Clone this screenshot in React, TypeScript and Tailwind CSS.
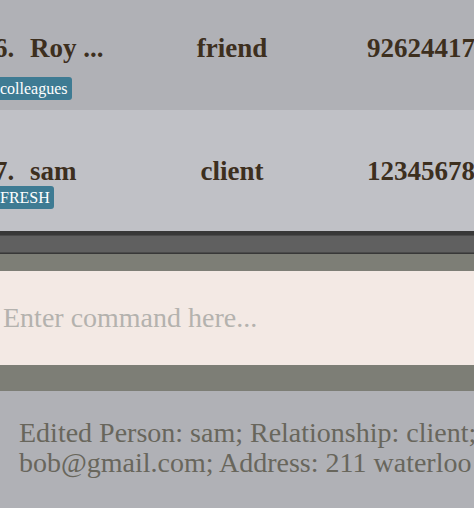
import React from "react";

const serif = { fontFamily: '"Liberation Serif", "DejaVu Serif", serif' };

function Row({
  bg,
  h,
  pt,
  gap,
  idx,
  name,
  rel,
  phone,
  tag,
}: {
  bg: string;
  h: string;
  pt: string;
  gap: string;
  idx: string;
  name: string;
  rel: string;
  phone: string;
  tag: string;
}) {
  return (
    <div className={`${bg} ${h} ${pt} overflow-hidden`}>
      <div className="flex items-baseline text-[27px] font-bold leading-[30px] text-[#3d2f1e] whitespace-nowrap">
        <div className="flex w-[166px] ml-[-6px] shrink-0">
          <span className="w-[36px]">{idx}</span>
          <span>{name}</span>
        </div>
        <div className="w-[144px] shrink-0 text-center">{rel}</div>
        <div className="pl-[63px]">{phone}</div>
      </div>
      <div className={`flex ${gap}`}>
        <span className="ml-[-4px] rounded-[3px] bg-[#3e7b93] px-[4px] text-[16px] leading-[23px] text-white">
          {tag}
        </span>
      </div>
    </div>
  );
}

export default function App() {
  return (
    <div className="w-[474px] h-[508px] overflow-hidden" style={serif}>
      <Row
        bg="bg-[#b0b1b6]"
        h="h-[110px]"
        pt="pt-[33px]"
        gap="mt-[14px]"
        idx="6."
        name="Roy ..."
        rel="friend"
        phone="92624417"
        tag="colleagues"
      />
      <Row
        bg="bg-[#c0c1c6]"
        h="h-[121px]"
        pt="pt-[46px]"
        gap="mt-[0px]"
        idx="7."
        name="sam"
        rel="client"
        phone="12345678"
        tag="FRESH"
      />
      <div className="h-[4px] bg-[#383838]" />
      <div className="h-[18px] bg-[#606060] border-t border-b border-[#4a4a4a]" />
      <div className="h-[1px] bg-[#383838]" />
      <div className="h-[17px] bg-[#7d7e76]" />
      <div className="h-[94px] bg-[#f3e9e4] flex items-center pl-[3px]">
        <span className="text-[28px] leading-[30px] text-[#b4b2ae] whitespace-nowrap">
          Enter command here...
        </span>
      </div>
      <div className="h-[26px] bg-[#7d7e76]" />
      <div className="h-[117px] bg-[#b0b1b6] pl-[19px] pt-[27px] text-[28px] leading-[30px] text-[#68665c] whitespace-nowrap overflow-hidden">
        <div>Edited Person: sam; Relationship: client; Phone: 12345678;</div>
        <div>bob@gmail.com; Address: 211 waterloo</div>
      </div>
    </div>
  );
}
